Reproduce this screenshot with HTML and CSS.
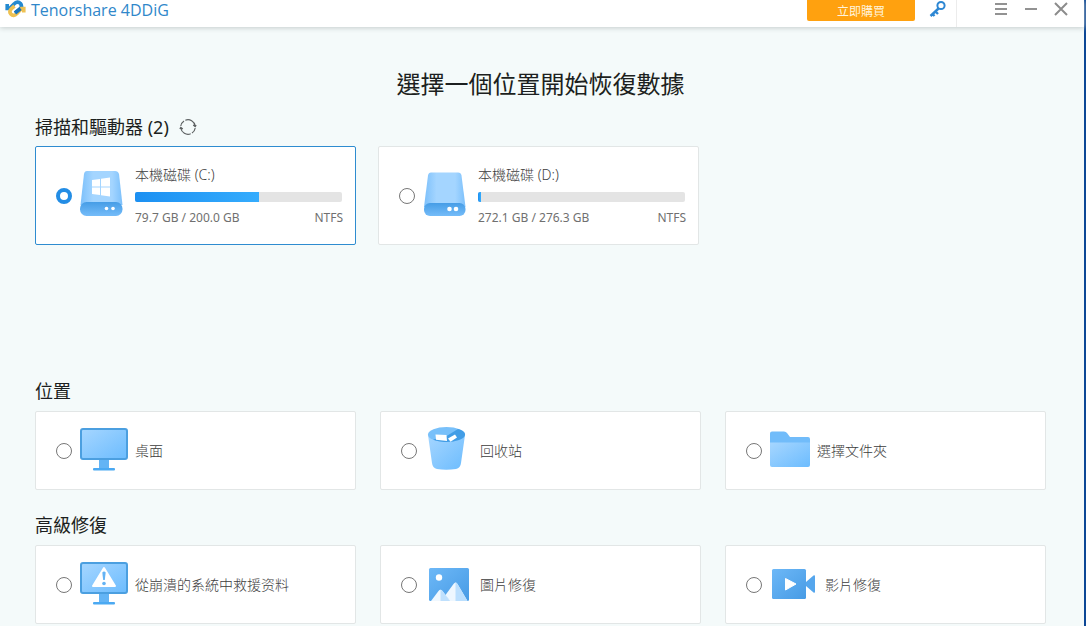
FILE: index.html
```html
<!DOCTYPE html>
<html lang="zh-Hant">
<head>
<meta charset="utf-8">
<meta name="viewport" content="width=device-width, initial-scale=1">
<title>Tenorshare 4DDiG</title>
<link rel="stylesheet" href="styles.css">
</head>
<body>
<svg class="defs" aria-hidden="true">
  <defs>
    <linearGradient id="light" x1="0" y1="0" x2="1" y2="1"><stop offset="0" stop-color="#a6d6ff"/><stop offset="1" stop-color="#6cbcfe"/></linearGradient>
    <linearGradient id="side" x1="0" y1="0" x2="1" y2="0"><stop offset="0" stop-color="#7cc0fb"/><stop offset=".3" stop-color="#a4d5ff"/><stop offset=".75" stop-color="#a4d5ff"/><stop offset="1" stop-color="#7cc0fb"/></linearGradient>
    <linearGradient id="base" x1="0" y1="0" x2="0" y2="1"><stop offset="0" stop-color="#469de6"/><stop offset="1" stop-color="#75bcf9"/></linearGradient>
    <linearGradient id="deep" x1="0" y1="0" x2="1" y2="1"><stop offset="0" stop-color="#6db8f7"/><stop offset="1" stop-color="#479be5"/></linearGradient>
  </defs>
</svg>
<div class="window">
  <header class="titlebar">
    <div class="brand">
      <svg class="logo" width="21" height="18" viewBox="0 0 21 18" fill="none" stroke-width="3.600" aria-hidden="true">
        <path d="M2.200 4V8.500H4.500L9 4Q12.500 .500 15.500 3.500Q18 6.500 14.500 9.500L10 13" stroke="#2489d0"/>
        <path d="M18.800 12.500V8.500H16.500L12 13.500Q8.500 17 5.800 14Q3.500 11.500 6.500 8.500L9.500 6" stroke="#eec152"/>
        <path d="M15.500 8.500L10 13" stroke="#1a74bb"/>
      </svg>
      <span class="brand-name">Tenorshare 4DDiG</span>
    </div>
    <div class="account">
      <button class="buy" type="button">立即購買</button>
      <button class="icon-button" type="button" aria-label="註冊">
        <svg width="18" height="18" viewBox="0 0 18 18" fill="none" stroke="#2d87d3" stroke-width="2" aria-hidden="true"><circle cx="12" cy="5.500" r="3.600"/><path d="M9.500 8.500L1.500 16M6.500 11.500L9 14M3.500 14L5.500 16" stroke-width="2.400"/></svg>
      </button>
    </div>
    <div class="controls">
      <button class="icon-button" type="button" aria-label="選單"><svg width="14" height="14" viewBox="0 0 14 14" stroke="#929292" stroke-width="2" aria-hidden="true"><path d="M1 2H13M1 7H13M1 12H13"/></svg></button>
      <button class="icon-button" type="button" aria-label="最小化"><svg width="14" height="14" viewBox="0 0 14 14" stroke="#929292" stroke-width="2" aria-hidden="true"><path d="M1 7H13"/></svg></button>
      <button class="icon-button" type="button" aria-label="關閉"><svg width="14" height="14" viewBox="0 0 14 14" stroke="#8c8c8c" stroke-width="2" aria-hidden="true"><path d="M1 1L13 13M13 1L1 13"/></svg></button>
    </div>
  </header>
  <main class="content">
    <h1 class="title">選擇一個位置開始恢復數據</h1>

    <section class="drives">
      <div class="heading-row">
        <h2 class="heading">掃描和驅動器 (2)</h2>
        <button class="icon-button" type="button" aria-label="重新整理">
          <svg width="18" height="18" viewBox="0 0 18 18" fill="none" stroke="#5d6162" stroke-width="1.200" aria-hidden="true"><path d="M1.800 8A7.300 7.300 0 0 1 5 2.900M6.300 2.200A7.300 7.300 0 0 1 16.200 8M16.200 10A7.300 7.300 0 0 1 13 15.100M11.700 15.800A7.300 7.300 0 0 1 1.800 10M14.200 7L16.200 8.600L17.200 7.200M3.800 11L1.800 9.400L.8 10.800"/></svg>
        </button>
      </div>
      <div class="grid drive-grid">
        <label class="card drive selected">
          <input class="radio" type="radio" name="source" checked>
          <svg class="icon" width="48" height="54" viewBox="0 0 48 54" aria-hidden="true">
            <path d="M7 2H35Q38 2 39 5L42.500 36H.5L4 5Q4.500 2 7 2Z" fill="url(#side)"/>
            <rect y="33" width="42.500" height="14" rx="6.500" fill="url(#base)"/>
            <path d="M12 11L20 10V17.500H12ZM21 9.700L30 8.500V17.500H21ZM12 18.500H20V26L12 25ZM21 18.500H30V27.500L21 26.200Z" fill="#fff"/>
            <circle cx="26.500" cy="39.500" r="1.800" fill="#fff"/><circle cx="33" cy="39.500" r="1.800" fill="#fff"/>
          </svg>
          <span class="details">
            <span class="label">本機磁碟 (C:)</span>
            <span class="bar"><span class="fill" style="width:60%"></span></span>
            <span class="meta"><span>79.7 GB / 200.0 GB</span><span>NTFS</span></span>
          </span>
        </label>
        <label class="card drive">
          <input class="radio" type="radio" name="source">
          <svg class="icon" width="48" height="54" viewBox="0 0 48 54" aria-hidden="true">
            <path d="M8 3.500H35Q38 3.500 38.500 6.500L42.500 38H1L5 6.500Q5.500 3.500 8 3.500Z" fill="url(#side)"/>
            <rect x="1" y="34" width="41.500" height="13" rx="6" fill="url(#base)"/>
            <circle cx="26.500" cy="40" r="2.300" fill="#fff"/><circle cx="33" cy="40" r="2.300" fill="#fff"/>
          </svg>
          <span class="details">
            <span class="label">本機磁碟 (D:)</span>
            <span class="bar"><span class="fill" style="width:1.5%"></span></span>
            <span class="meta"><span>272.1 GB / 276.3 GB</span><span>NTFS</span></span>
          </span>
        </label>
      </div>
    </section>

    <section class="group">
      <h2 class="heading">位置</h2>
      <div class="grid">
        <label class="card">
          <input class="radio" type="radio" name="source">
          <svg class="icon" width="48" height="48" viewBox="0 0 48 48" aria-hidden="true">
            <rect x="19" y="32" width="10" height="10" fill="#63b4f5"/><rect x="13" y="41" width="22" height="2.500" rx="1" fill="#4ba9f2"/>
            <rect x="1" y="2" width="46" height="30" rx="2" fill="url(#light)" stroke="#4b9fe0" stroke-width="2"/>
          </svg>
          <span class="label">桌面</span>
        </label>
        <label class="card">
          <input class="radio" type="radio" name="source">
          <svg class="icon" width="48" height="48" viewBox="0 0 48 48" aria-hidden="true">
            <path d="M3 8L7 36Q7.500 41 12 42Q21 43.500 31 42Q35.500 41 36 36L40 8Z" fill="url(#light)"/>
            <ellipse cx="21.500" cy="7.500" rx="18.500" ry="7.500" fill="#78c0fa"/>
            <path d="M33 1.900C42 4 42.500 10 34 13Q28 15.200 19 14.900Q12 14.500 8 12.500L20 10Z" fill="#429de6"/>
            <path d="M10.500 7.500L21.500 8L22 14L11 12.800ZM23 11.500L30 7.500L32 10.500L25.500 14.800Z" fill="#fff"/>
          </svg>
          <span class="label">回收站</span>
        </label>
        <label class="card">
          <input class="radio" type="radio" name="source">
          <svg class="icon" width="40" height="48" viewBox="0 0 40 48" aria-hidden="true">
            <path d="M0 6.500Q0 4.500 2 4.500H14Q16 4.500 17 6L20 10H38Q40 10 40 12V20H0Z" fill="#71bcfa"/>
            <path d="M0 15.500H40V38Q40 40 38 40H2Q0 40 0 38Z" fill="url(#light)"/>
          </svg>
          <span class="label">選擇文件夾</span>
        </label>
      </div>
    </section>

    <section class="group">
      <h2 class="heading">高級修復</h2>
      <div class="grid">
        <label class="card">
          <input class="radio" type="radio" name="source">
          <svg class="icon" width="48" height="48" viewBox="0 0 48 48" aria-hidden="true">
            <rect x="19" y="32" width="10" height="10" fill="#63b4f5"/><rect x="13" y="41" width="22" height="2.500" rx="1" fill="#4ba9f2"/>
            <rect x="1" y="2" width="46" height="30" rx="2" fill="url(#light)" stroke="#4b9fe0" stroke-width="2"/>
            <path d="M24 7L35 25H13Z" fill="#fff" stroke="#fff" stroke-width="2" stroke-linejoin="round"/>
            <path d="M22.300 11.500Q24 9.500 25.700 11.500L24.800 19H23.200Z" fill="#64b3f4"/><circle cx="24" cy="22.500" r="1.800" fill="#64b3f4"/>
          </svg>
          <span class="label">從崩潰的系統中救援资料</span>
        </label>
        <label class="card">
          <input class="radio" type="radio" name="source">
          <svg class="icon" width="48" height="48" viewBox="0 0 48 48" aria-hidden="true">
            <rect x="4" y="7" width="40" height="33" rx="1.500" fill="url(#deep)"/>
            <circle cx="14" cy="16.500" r="3.200" fill="#fff"/>
            <path d="M6 40L13.500 30Q15.500 27.500 17.500 30L25 40Z" fill="#f0f8ff"/><path d="M15.500 28.500Q16.500 29 17.500 30L25 40H15.500Z" fill="#bfe0fd"/>
            <path d="M20.500 34L28.500 23Q30.500 20 32.500 23L42.500 40H25Z" fill="#eef7ff"/><path d="M30.500 21Q31.500 21.500 32.500 23L42.500 40H30.500Z" fill="#bbdffe"/>
          </svg>
          <span class="label">圖片修復</span>
        </label>
        <label class="card">
          <input class="radio" type="radio" name="source">
          <svg class="icon" width="48" height="48" viewBox="0 0 48 48" aria-hidden="true">
            <rect x="2" y="8" width="34" height="30" rx="1.500" fill="url(#deep)"/>
            <path d="M36 21L43.500 14.500Q45 13.500 45 15.500V30.500Q45 32.500 43.500 31.500L36 25Z" fill="#55a6ed"/>
            <path d="M15.500 17.500L26 23L15.500 29Z" fill="#fff" stroke="#fff" stroke-linejoin="round"/>
          </svg>
          <span class="label">影片修復</span>
        </label>
      </div>
    </section>
  </main>
</div>
</body>
</html>
```
FILE: styles.css
```css
* { box-sizing: border-box; }

body {
  margin: 0;
  background: #fff;
  color: #1c1f20;
  font-family: "Noto Sans", "Noto Sans CJK TC", sans-serif;
}

.defs { position: absolute; width: 0; height: 0; }

.window {
  min-height: calc(100vh - 2px);
  margin-bottom: 2px;
  background: #f4fafa;
  border-right: 2px solid #0c4796;
}

.titlebar {
  display: flex;
  height: 27px;
  background: #fff;
  box-shadow: 0 1px 5px #c4cccc;
}

.brand {
  display: flex;
  flex: 1;
  align-items: flex-start;
  gap: 5px;
  padding-left: 5px;
}

.brand-name {
  color: #3087ca;
  font-family: "Open Sans", "Noto Sans", sans-serif;
  font-size: 16px;
  line-height: 20px;
}

.account {
  display: flex;
  align-items: flex-start;
  gap: 14px;
  padding-right: 9px;
  border-right: 1px solid #ececec;
}

.buy {
  width: 108px;
  height: 21px;
  padding: 0;
  border: 0;
  border-radius: 0 0 2px 2px;
  background: #ffa10f;
  color: #fff4dc;
  font-family: "Noto Sans CJK TC", sans-serif;
  font-size: 12px;
  line-height: 18px;
}

.icon-button {
  display: flex;
  padding: 0;
  border: 0;
  background: none;
}

.controls {
  display: flex;
  align-items: flex-start;
  gap: 16px;
  padding: 2px 16px 0 37px;
}

.content { padding: 40px 38px 1px 35px; }

.title {
  margin: 0;
  font-size: 24px;
  font-weight: 400;
  line-height: 34px;
  text-align: center;
}

.heading-row {
  display: flex;
  align-items: center;
  gap: 10px;
}

.heading {
  margin: 0;
  font-size: 18px;
  font-weight: 400;
  line-height: 26px;
}

.drives { margin-top: 13px; min-height: 264px; }

.grid {
  display: grid;
  grid-template-columns: repeat(3, 1fr);
  gap: 24px;
  margin-top: 7px;
}

.drive-grid { gap: 22px; margin-top: 6px; padding-right: 4px; }

.group + .group { margin-top: 22px; }

.card {
  display: flex;
  align-items: center;
  min-height: 79px;
  padding: 0 12px 0 20px;
  border: 1px solid #e2e6e6;
  border-radius: 2px;
  background: #fff;
}

.drive { min-height: 99px; }

.selected { border: 1px solid #2e8cd0; }

.radio {
  flex: none;
  appearance: none;
  width: 16px;
  height: 16px;
  margin: 0 8px 0 0;
  border: 1px solid #777;
  border-radius: 50%;
  background: #fff;
}

.radio:checked { border: 4px solid #238de5; }

.icon { flex: none; margin-right: 7px; }

.details { flex: 1; }

.label {
  color: #3c3c3c;
  font-size: 14px;
  font-weight: 300;
  line-height: 20px;
}

.details .label { display: block; }

.bar {
  display: block;
  height: 10px;
  margin: 7px 1px 0 0;
  border-radius: 2px;
  background: #e4e4e4;
  overflow: hidden;
}

.fill {
  display: block;
  height: 100%;
  background: linear-gradient(90deg, #1c90f2, #35acfd);
}

.meta {
  display: flex;
  justify-content: space-between;
  margin-top: 7px;
  color: #707070;
  font-size: 12px;
  line-height: 18px;
}
```
